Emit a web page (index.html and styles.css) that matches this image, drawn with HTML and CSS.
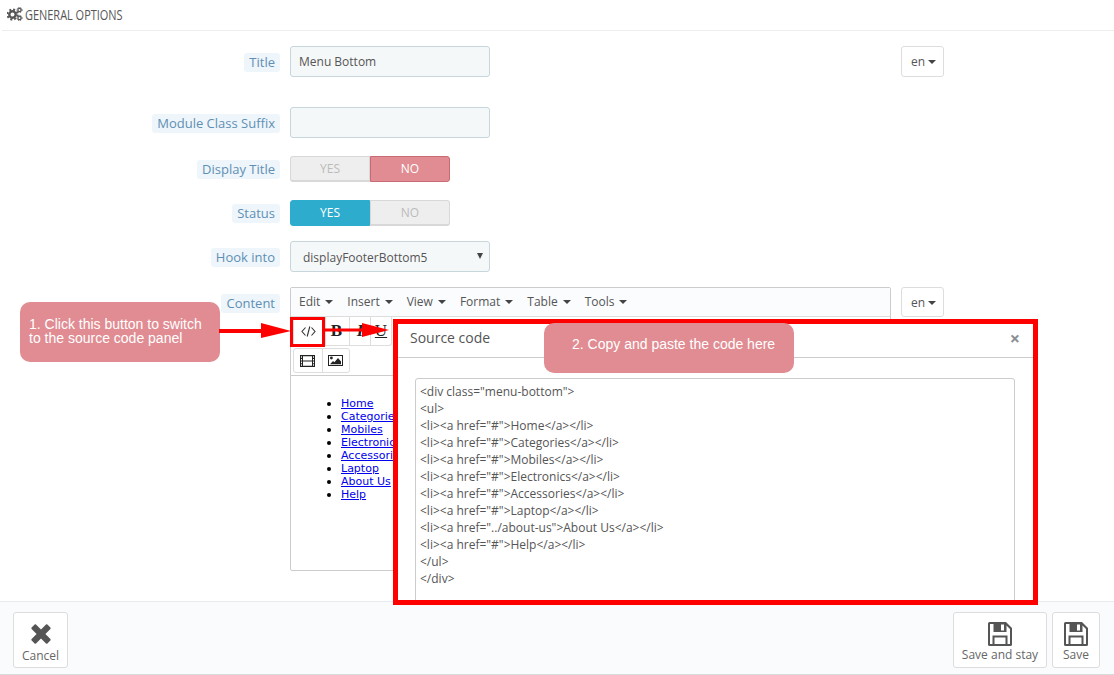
FILE: index.html
```html
<!DOCTYPE html>
<html lang="en">
<head>
<meta charset="utf-8">
<title>General Options</title>
<link rel="stylesheet" href="styles.css">
</head>
<body>
<div class="page">
  <header class="panel-head">
    <svg class="cogs" width="16" height="14" viewBox="0 0 16 14"><circle cx="5.5" cy="7.5" r="3.2" fill="none" stroke="#555" stroke-width="2.4"/><circle cx="5.5" cy="7.5" r="5" fill="none" stroke="#555" stroke-width="2" stroke-dasharray="2 1.93"/><circle cx="12.5" cy="3" r="1.6" fill="none" stroke="#555" stroke-width="1.3"/><circle cx="12.5" cy="3" r="2.6" fill="none" stroke="#555" stroke-width="1" stroke-dasharray="1.1 1.06"/><circle cx="12.5" cy="11" r="1.6" fill="none" stroke="#555" stroke-width="1.3"/><circle cx="12.5" cy="11" r="2.6" fill="none" stroke="#555" stroke-width="1" stroke-dasharray="1.1 1.06"/></svg>
    <span class="panel-title">GENERAL OPTIONS</span>
  </header>

  <main class="form">
    <div class="row row-input gap-30">
      <span class="label-cell"><span class="label">Title</span></span>
      <div class="field">Menu Bottom</div>
      <div class="lang">en<i class="caret"></i></div>
    </div>
    <div class="row row-input gap-18">
      <span class="label-cell"><span class="label">Module Class Suffix</span></span>
      <div class="field"></div>
    </div>
    <div class="row row-toggle gap-18">
      <span class="label-cell"><span class="label">Display Title</span></span>
      <div class="toggle"><span class="opt">YES</span><span class="opt no-on">NO</span></div>
    </div>
    <div class="row row-toggle gap-15">
      <span class="label-cell"><span class="label">Status</span></span>
      <div class="toggle"><span class="opt yes-on">YES</span><span class="opt">NO</span></div>
    </div>
    <div class="row row-input gap-15">
      <span class="label-cell"><span class="label">Hook into</span></span>
      <div class="field select">displayFooterBottom5</div>
    </div>
    <div class="row">
      <span class="label-cell label-top"><span class="label">Content</span></span>
      <div class="editor">
        <nav class="menubar">
          <span class="menu">Edit<i class="caret"></i></span>
          <span class="menu">Insert<i class="caret"></i></span>
          <span class="menu">View<i class="caret"></i></span>
          <span class="menu">Format<i class="caret"></i></span>
          <span class="menu">Table<i class="caret"></i></span>
          <span class="menu">Tools<i class="caret"></i></span>
        </nav>
        <div class="toolbar">
          <div class="tool-group group-one">
            <span class="tool tool-code"><svg width="15" height="11" viewBox="0 0 15 11"><path d="M4.5 1.5 1 5.5l3.5 4M10.5 1.5l3.5 4-3.5 4M8.8 .5 6.2 10.5" fill="none" stroke="#333" stroke-width="1.1"/></svg></span>
            <span class="tool tool-b">B</span>
            <span class="tool tool-i">I</span>
            <span class="tool tool-u">U</span>
          </div>
          <div class="tool-group group-two">
            <span class="tool tool-media"><svg width="15" height="12" viewBox="0 0 15 12"><path fill="#222" fill-rule="evenodd" d="M0 0h15v12H0zM3 1.2v4.2h9V1.2zM3 6.600v4.200h9V6.600zM1 1.200v1.600h1V1.200zM1 4v1.600h1V4zM1 6.600v1.600h1V6.600zM1 9.200v1.600h1V9.200zM13 1.200v1.600h1V1.200zM13 4v1.600h1V4zM13 6.600v1.600h1V6.600zM13 9.200v1.600h1V9.200z"/></svg></span>
            <span class="tool tool-image"><svg width="15" height="11" viewBox="0 0 15 11"><path fill="#222" fill-rule="evenodd" d="M0 0h15v11H0zM1 1v9h13V1z"/><circle cx="3.400" cy="3" r="1.400" fill="#222"/><path fill="#222" d="M2 9.200 5 6l1.400 1.200L10 3l3 3.400v2.800z"/></svg></span>
          </div>
        </div>
        <ul class="doc">
          <li><a href="#">Home</a></li>
          <li><a href="#">Categories</a></li>
          <li><a href="#">Mobiles</a></li>
          <li><a href="#">Electronics</a></li>
          <li><a href="#">Accessories</a></li>
          <li><a href="#">Laptop</a></li>
          <li><a href="#">About Us</a></li>
          <li><a href="#">Help</a></li>
        </ul>
      </div>
      <div class="lang lang-small">en<i class="caret"></i></div>
    </div>
  </main>

  <footer class="actions">
    <div class="action action-cancel">
      <svg width="20" height="20" viewBox="0 0 20 20"><path fill="#555" d="M5 .6 10 5.600 15 .6q.7-.6 1.400 0l3 3q.6.7 0 1.400l-5 5 5 5q.6.7 0 1.400l-3 3q-.7.6-1.400 0l-5-5-5 5q-.7.6-1.400 0l-3-3q-.6-.7 0-1.400l5-5-5-5q-.6-.7 0-1.400l3-3q.7-.6 1.400 0z"/></svg>
      <span>Cancel</span>
    </div>
    <div class="action-group">
      <div class="action action-stay">
        <svg width="24" height="24" viewBox="0 0 24 24"><path fill="#555" fill-rule="evenodd" d="M1.5 0H18l6 6v16.500a1.500 1.500 0 0 1-1.500 1.500H1.500A1.500 1.500 0 0 1 0 22.500V1.500A1.500 1.500 0 0 1 1.500 0zM2 2v20h2.500V13.500h15V22H22V7l-3.500-3.500V10H5.500V2zM6.500 15.500V22h11v-6.500zM13 2.500h3v6h-3z"/></svg>
        <span>Save and stay</span>
      </div>
      <div class="action action-save">
        <svg width="24" height="24" viewBox="0 0 24 24"><path fill="#555" fill-rule="evenodd" d="M1.5 0H18l6 6v16.500a1.500 1.500 0 0 1-1.500 1.500H1.500A1.500 1.500 0 0 1 0 22.500V1.500A1.500 1.500 0 0 1 1.500 0zM2 2v20h2.500V13.500h15V22H22V7l-3.500-3.500V10H5.500V2zM6.500 15.500V22h11v-6.500zM13 2.500h3v6h-3z"/></svg>
        <span>Save</span>
      </div>
    </div>
  </footer>

  <section class="dialog">
    <div class="dialog-head"><span class="dialog-title">Source code</span><span class="dialog-close">×</span></div>
    <pre class="code">&lt;div class="menu-bottom"&gt;
&lt;ul&gt;
&lt;li&gt;&lt;a href="#"&gt;Home&lt;/a&gt;&lt;/li&gt;
&lt;li&gt;&lt;a href="#"&gt;Categories&lt;/a&gt;&lt;/li&gt;
&lt;li&gt;&lt;a href="#"&gt;Mobiles&lt;/a&gt;&lt;/li&gt;
&lt;li&gt;&lt;a href="#"&gt;Electronics&lt;/a&gt;&lt;/li&gt;
&lt;li&gt;&lt;a href="#"&gt;Accessories&lt;/a&gt;&lt;/li&gt;
&lt;li&gt;&lt;a href="#"&gt;Laptop&lt;/a&gt;&lt;/li&gt;
&lt;li&gt;&lt;a href="../about-us"&gt;About Us&lt;/a&gt;&lt;/li&gt;
&lt;li&gt;&lt;a href="#"&gt;Help&lt;/a&gt;&lt;/li&gt;
&lt;/ul&gt;
&lt;/div&gt;</pre>
  </section>

  <div class="callout callout-one">1. Click this button to switch<br>to the source code panel</div>
  <div class="callout callout-two">2. Copy and paste the code here</div>
  <div class="code-marker"></div>
  <svg class="arrows" width="180" height="20" viewBox="0 0 180 20"><path fill="#f00" d="M0 6h42V0l30 8-30 7V10H0zM106 5.500h37V0l27 7-27 7V8.500h-37z"/></svg>
</div>
</body>
</html>
```
FILE: styles.css
```css
* { box-sizing: border-box; }
html, body { margin: 0; padding: 0; background: #fff; }
body { font-family: "Open Sans", "Liberation Sans", sans-serif; font-size: 12px; color: #555; }
.page { position: relative; width: 1114px; height: 675px; overflow: hidden; }

.panel-head { height: 31px; margin-left: 2px; border-bottom: 1px solid #eeeeee; display: flex; align-items: center; padding: 0 0 3px 5px; gap: 2px; }
.panel-title { display: inline-block; font-family: "Open Sans", sans-serif; font-size: 15px; color: #555; transform: scaleX(.73); transform-origin: left center; white-space: nowrap; }
.cogs { flex: none; }

.form { height: 570px; padding-top: 15px; }
.row { display: grid; grid-template-columns: 280px 601px 43px; column-gap: 10px; align-items: start; }
.row-input { height: 31px; }
.row-toggle { height: 26px; }
.gap-30 { margin-bottom: 30px; }
.gap-18 { margin-bottom: 18px; }
.gap-15 { margin-bottom: 15px; }

.label-cell { display: flex; justify-content: flex-end; align-self: center; }
.row-input .label-cell { padding-top: 2px; }
.label-top { align-self: start; margin-top: 7px; }
.label { display: block; height: 19px; line-height: 19px; padding: 0 5px; background: #eef6fb; border-radius: 3px; color: #5f8fb4; font-size: 13px; }

.field { width: 200px; height: 31px; line-height: 29px; padding: 0 8px; background: #f5f8f9; border: 1px solid #c7d6db; border-radius: 3px; color: #555; font-size: 12px; }
.select { position: relative; padding-left: 12px; line-height: 31px; }
.select::after { content: ""; position: absolute; right: 6px; top: 11px; border: 3px solid transparent; border-top: 6px solid #444; border-bottom: 0; }

.lang { grid-column: 3; grid-row: 1; width: 43px; height: 31px; line-height: 29px; padding-left: 9px; border: 1px solid #ddd; border-radius: 3px; font-size: 12px; color: #555; }
.lang-small { height: 30px; }
.caret { display: inline-block; width: 0; height: 0; margin-left: 3px; vertical-align: 2px; border-left: 4px solid transparent; border-right: 4px solid transparent; border-top: 4px solid #444; }

.toggle { display: flex; width: 160px; height: 26px; }
.opt { flex: 1; line-height: 24px; text-align: center; background: #eee; border: 1px solid #d8d8d8; border-bottom-width: 2px; color: #bbb; font-size: 12px; }
.opt:first-child { border-radius: 3px 0 0 3px; }
.opt:last-child { border-radius: 0 3px 3px 0; }
.no-on { background: #e08c92; border: 1px solid #c86b72; color: #fff; }
.yes-on { background: #2eacce; border: 1px solid #2eacce; color: #fff; }

.editor { height: 284px; border: 1px solid #ccc; border-radius: 2px; display: flex; flex-direction: column; }
.menubar { height: 29px; background: #fafcfe; border-bottom: 1px solid #ddd; display: flex; align-items: center; padding: 0 0 2px 8px; gap: 14px; }
.menu { color: #555; font-size: 12px; }
.menu .caret { margin-left: 5px; }
.toolbar { height: 59px; border-bottom: 1px solid #ccc; padding: 0 0 0 2px; display: flex; flex-direction: column; gap: 2px; }
.tool-group { display: flex; border: 1px solid #ddd; border-radius: 3px; align-self: flex-start; }
.group-one { height: 29px; border-top: 0; border-radius: 0 0 3px 3px; }
.group-two { height: 25px; }
.tool { display: flex; align-items: center; justify-content: center; border-left: 1px solid #ddd; color: #222; font-family: "Liberation Serif", serif; font-size: 17px; }
.tool:first-child { border-left: 0; }
.tool-code { width: 31px; padding-right: 3px; }
.tool-b { width: 24px; padding-right: 2px; font-weight: bold; }
.tool-i { width: 21px; font-style: italic; font-weight: bold; }
.tool-u { width: 21px; text-decoration: underline; }
.tool-media { width: 28px; padding-right: 1px; }
.tool-image { width: 27px; padding-right: 1px; }

.doc { margin: 0; padding: 21px 0 0 50px; list-style: none; font-family: "DejaVu Sans", sans-serif; font-size: 11px; line-height: 13px; color: #000; }
.doc li { position: relative; }
.doc li::before { content: ""; position: absolute; left: -14px; top: 5px; width: 4px; height: 4px; border-radius: 50%; background: #000; }
.doc a { color: #00e; }

.actions { height: 74px; background: #fafbfc; border-top: 1px solid #e8eaed; border-bottom: 1px solid #d8dadd; padding: 10px 14px 0 13px; display: flex; justify-content: space-between; align-items: flex-start; }
.action-group { display: flex; gap: 5px; }
.action { height: 56px; background: #fff; border: 1px solid #ddd; border-radius: 3px; display: flex; flex-direction: column; align-items: center; color: #666; font-size: 12px; line-height: 16px; }
.action svg { display: block; }
.action span { display: block; }
.action-cancel { width: 55px; padding-top: 11px; gap: 4px; }
.action-stay { width: 94px; padding-top: 9px; gap: 1px; }
.action-save { width: 48px; padding-top: 9px; gap: 1px; }

.dialog { position: absolute; left: 393px; top: 319px; width: 645px; height: 286px; background: #fff; border: 5px solid #f00; overflow: hidden; }
.dialog-head { height: 34px; border-bottom: 1px solid #ccc; display: flex; justify-content: space-between; align-items: center; padding: 0 13px 6px 12px; }
.dialog-title { font-size: 14px; color: #555; }
.dialog-close { font-size: 18px; font-weight: bold; color: #8a8f96; }
.code { margin: 20px 18px 0 17px; height: 240px; padding: 4px 4px 0 4px; border: 1px solid #ccc; border-radius: 3px 3px 0 0; font-family: "Open Sans", sans-serif; font-size: 12px; line-height: 17px; color: #555; overflow: hidden; white-space: pre; }

.callout { position: absolute; background: #e08c92; color: #fff; font-family: "Liberation Sans", Arial, sans-serif; font-size: 14px; line-height: 14px; }
.callout-one { left: 20px; top: 302px; width: 200px; height: 60px; padding: 15px 0 0 9px; border-radius: 10px; }
.callout-two { left: 544px; top: 323px; width: 250px; height: 50px; padding: 14px 0 0 28px; border-radius: 10px; }
.code-marker { position: absolute; left: 290px; top: 317px; width: 35px; height: 30px; border: 3px solid #f00; }
.arrows { position: absolute; left: 219px; top: 323px; }
```
